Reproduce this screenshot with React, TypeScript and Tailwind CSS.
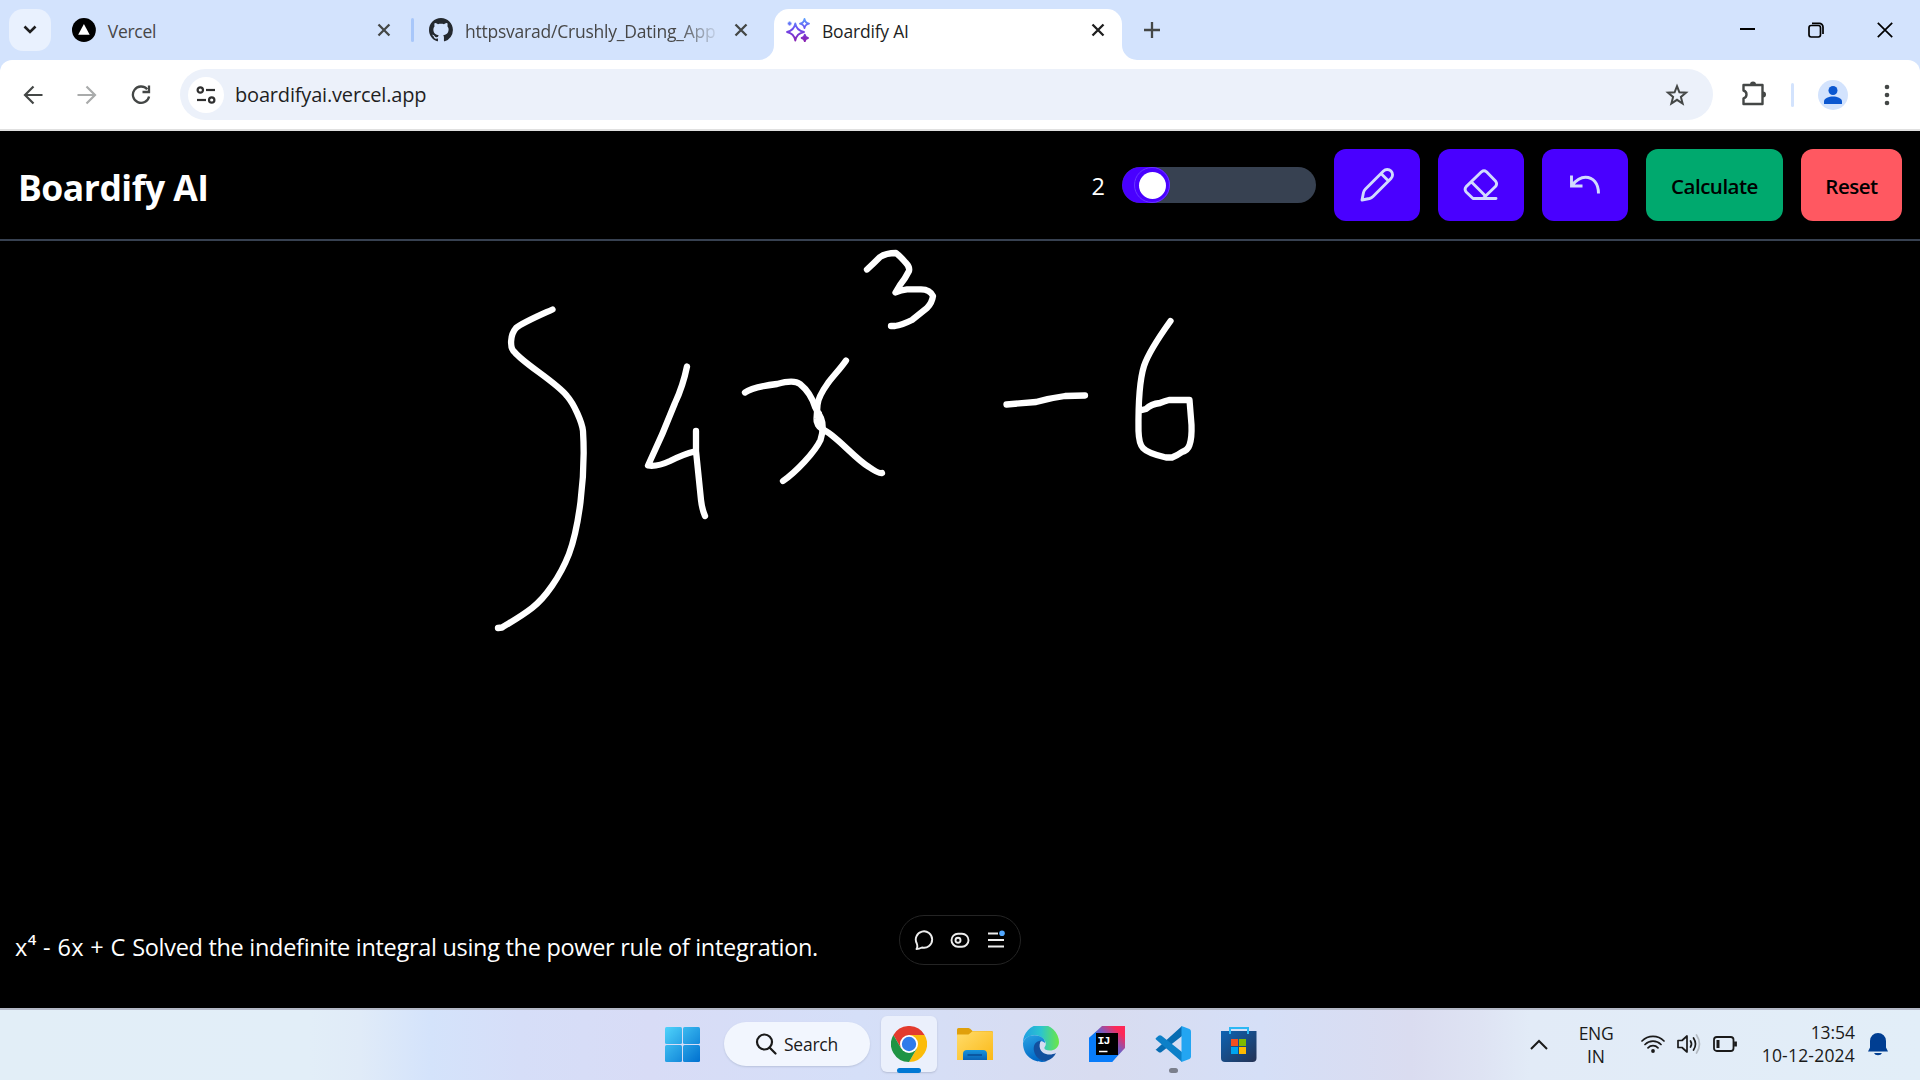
import React from "react";

const ui = "font-['Open_Sans','Noto_Sans',sans-serif]";

interface TxtProps {
  children: React.ReactNode;
  className?: string;
}

// Single-line label with a tight line box.
function Txt({ children, className = "" }: TxtProps) {
  return <span className={`block whitespace-nowrap leading-none ${className}`}>{children}</span>;
}

function Close({ c = "#444746" }: { c?: string }) {
  return (
    <svg width="14" height="14" viewBox="0 0 14 14" stroke={c} strokeWidth="2.3">
      <path d="M1.5 1.5 12.5 12.5M12.5 1.5 1.5 12.5" />
    </svg>
  );
}

function Sparkles() {
  return (
    <svg width="24" height="24" viewBox="0 0 24 24" fill="none" strokeWidth="1.8" strokeLinejoin="round">
      <defs>
        <linearGradient id="sp" x1="0" y1="0" x2="0" y2="24" gradientUnits="userSpaceOnUse">
          <stop offset="0" stopColor="#5ba4ff" />
          <stop offset=".45" stopColor="#6d4cf0" />
          <stop offset="1" stopColor="#8a1fae" />
        </linearGradient>
      </defs>
      <g stroke="url(#sp)">
        <path d="M9.3 5.5Q10.600 12.600 18 14Q10.600 15.400 9.3 22.500Q8 15.400 1 14Q8 12.600 9.3 5.5Z" />
        <path d="M18.500 1Q19.200 5 23 5.600Q19.200 6.300 18.500 10Q17.800 6.300 14 5.600Q17.800 5 18.500 1Z" />
        <path d="M18.800 16.600Q19.300 19.500 22 20Q19.300 20.500 18.800 23.400Q18.300 20.500 15.600 20Q18.300 19.500 18.800 16.600Z" fill="#8a1fae" />
        <path d="M3.600 3.600V7.400M1.700 5.500H5.500" />
      </g>
    </svg>
  );
}

function TabStrip() {
  return (
    <div className="flex h-[60px] items-end bg-[#d3e3fd] pl-[9px]">
      <div className="mb-[9px] flex size-[42px] items-center justify-center rounded-[14px] bg-[#e9f1fe]">
        <svg width="14" height="10" viewBox="0 0 14 10" fill="none" stroke="#1f1f1f" strokeWidth="2.6"><path d="M1.5 1.5 7 7 12.500 1.500" /></svg>
      </div>
      <div className="ml-[21px] flex h-[60px] w-[319px] items-center">
        <svg width="24" height="24" viewBox="0 0 24 24"><circle cx="12" cy="12" r="12" fill="#000" /><path d="M12 6 17.800 16.800H6.200Z" fill="#fff" /></svg>
        <div className="ml-3 mt-[3px] w-[271px]"><Txt className="text-[17.5px] tracking-[-0.3px] text-[#474747]">Vercel</Txt></div>
        <Close />
      </div>
      <div className="mb-[18px] ml-[20px] h-[24px] w-[3px] rounded-sm bg-[#a8c7fa]" />
      <div className="ml-[15px] flex h-[60px] w-[319px] items-center">
        <svg width="24" height="24" viewBox="0 0 16 16" fill="#24292f"><path d="M8 0C3.580 0 0 3.580 0 8c0 3.540 2.290 6.530 5.470 7.590.4.070.55-.17.55-.38 0-.19-.01-.82-.01-1.490-2.010.37-2.530-.49-2.690-.94-.09-.23-.48-.94-.82-1.130-.28-.15-.68-.52-.01-.53.63-.01 1.080.58 1.230.82.72 1.210 1.870.87 2.330.66.07-.52.28-.87.51-1.070-1.780-.2-3.640-.89-3.640-3.950 0-.87.31-1.590.82-2.150-.08-.2-.36-1.020.08-2.120 0 0 .67-.21 2.200.82.64-.18 1.320-.27 2-.27s1.360.09 2 .27c1.530-1.040 2.200-.82 2.200-.82.44 1.100.16 1.920.08 2.120.51.56.82 1.270.82 2.150 0 3.070-1.870 3.750-3.650 3.950.29.25.54.73.54 1.480 0 1.070-.01 1.930-.01 2.200 0 .21.15.46.55.38A8.010 8.010 0 0 0 16 8c0-4.420-3.580-8-8-8" /></svg>
        <div className="ml-3 w-[254px] pb-1 pt-[7px] [mask-image:linear-gradient(to_right,#000_84%,transparent_101%)]"><Txt className="text-[17.5px] tracking-[-0.22px] text-[#474747]">httpsvarad/Crushly_Dating_App</Txt></div>
        <div className="ml-[16px]"><Close /></div>
      </div>
      <div className="relative ml-[26px] flex h-[51px] w-[348px] items-center rounded-t-[15px] bg-white pb-[9px] pl-3">
        <svg className="absolute -left-[15px] bottom-0" width="15" height="15"><path d="M15 0V15H0A15 15 0 0 0 15 0" fill="#fff" /></svg>
        <svg className="absolute -right-[15px] bottom-0" width="15" height="15"><path d="M0 0V15H15A15 15 0 0 1 0 0" fill="#fff" /></svg>
        <Sparkles />
        <div className="ml-3 mt-[3px] w-[269px]"><Txt className="text-[17.5px] tracking-[-0.2px] text-[#1f1f1f]">Boardify AI</Txt></div>
        <Close c="#1f1f1f" />
      </div>
      <svg className="mb-[22px] ml-[22px]" width="16" height="16" viewBox="0 0 16 16" stroke="#444746" strokeWidth="2.300"><path d="M8 0V16M0 8H16" /></svg>
      <div className="ml-auto flex h-[60px] items-center gap-[53px] pr-[27px]">
        <svg className="ml-px" width="16" height="16" viewBox="0 0 16 16" stroke="#000" strokeWidth="2"><path d="M1 7H16" /></svg>
        <svg width="16" height="16" viewBox="0 0 16 16" fill="none" stroke="#000" strokeWidth="1.700"><rect x="1" y="3.500" width="11.500" height="11.500" rx="2.200" /><path d="M4 1.300H11.200A3.700 3.700 0 0 1 15 5V12" /></svg>
        <svg width="16" height="16" viewBox="0 0 16 16" stroke="#000" strokeWidth="1.700"><path d="M.8.8 15.200 15.200M15.200.8.8 15.200" /></svg>
      </div>
    </div>
  );
}

function Toolbar() {
  return (
    <div className="bg-[#d3e3fd]">
      <div className="flex h-[71px] items-center rounded-t-[12px] border-b-2 border-[#e0e0e0] bg-white pl-[23px]">
        <svg width="20" height="20" viewBox="0 0 20 20" fill="none" stroke="#444746" strokeWidth="2.200"><path d="M10.500 1.500 2 10 10.500 18.500M2 10H19.500" /></svg>
        <svg className="ml-[34px]" width="20" height="20" viewBox="0 0 20 20" fill="none" stroke="#a9abab" strokeWidth="2.200"><path d="M9.500 1.500 18 10 9.500 18.500M18 10H.5" /></svg>
        <svg className="ml-[34px]" width="20" height="20" viewBox="0 0 20 20" fill="none" stroke="#444746" strokeWidth="2.300"><path d="M16.200 4.200A8.200 8.200 0 1 0 18.100 11.500M18 .5V7H11.500" /></svg>
        <div className="ml-[29px] flex h-[51px] w-[1533px] items-center rounded-full bg-[#ecf1fa] pl-2">
          <div className="flex size-9 items-center justify-center rounded-full bg-white">
            <svg width="20" height="18" viewBox="0 0 20 18" fill="none" stroke="#303030" strokeWidth="2.200"><circle cx="4.300" cy="4" r="2.700" /><path d="M10 4H19" /><circle cx="15.700" cy="14" r="2.700" /><path d="M1 14H10" /></svg>
          </div>
          <div className="ml-[11px]"><Txt className="text-[20px] tracking-[-0.18px] text-[#1f1f1f]">boardifyai.vercel.app</Txt></div>
          <svg className="ml-auto mr-[24px]" width="24" height="24" viewBox="0 0 24 24" fill="none" stroke="#444746" strokeWidth="2"><path d="M12 3.200 14.400 9.300 21 9.700 15.900 13.900 17.600 20.500 12 16.800 6.400 20.500 8.100 13.900 3 9.700 9.600 9.300Z" /></svg>
        </div>
        <svg className="mb-[3px] ml-[28px]" width="26" height="26" viewBox="0 0 26 26" fill="none" stroke="#444746" strokeWidth="2.400" strokeLinejoin="round"><path d="M2.500 5H21.500V24H2.500V18.500Q5.500 17.500 5.500 14.500T2.500 10.500Z" /><path d="M9 4.500A3 3 0 0 1 15 4.500ZM22 11.500A3 3 0 0 1 22 17.500Z" fill="#444746" stroke="none" /></svg>
        <div className="ml-[24px] h-[24px] w-[3px] rounded bg-[#d3e3fd]" />
        <div className="ml-6 flex size-[30px] items-center justify-center rounded-full bg-[#d3e3fd]">
          <svg width="18" height="18" viewBox="0 0 18 18" fill="#0b57d0"><circle cx="9" cy="4.500" r="4.500" /><path d="M0 18V15.500C0 12 5 10.500 9 10.500S18 12 18 15.500V18Z" /></svg>
        </div>
        <svg className="ml-[36px]" width="6" height="22" viewBox="0 0 6 22" fill="#444746"><circle cx="3" cy="3" r="2.300" /><circle cx="3" cy="11" r="2.300" /><circle cx="3" cy="19" r="2.300" /></svg>
      </div>
    </div>
  );
}

function ToolButton({ children }: { children: React.ReactNode }) {
  return <button className="flex h-[72px] w-[86px] items-center justify-center rounded-xl bg-[#4900ff] text-[#d1dbff]">{children}</button>;
}

function Header() {
  return (
    <header className="flex h-[110px] items-center border-b-2 border-[#374151] pl-[18px] pr-[18px]">
      <h1 className="mt-[5px]"><Txt className="text-[35.5px] font-bold tracking-[-0.5px] text-white">Boardify AI</Txt></h1>
      <div className="ml-auto mr-[17px] mt-[3px]"><Txt className="text-[23.5px] text-white">2</Txt></div>
      <div className="mr-[18px] flex h-9 w-[194px] items-center overflow-hidden rounded-full bg-[#374151]">
        <div className="flex h-9 w-12 justify-end rounded-full bg-[#4900ff]">
          <div className="flex size-9 items-center justify-center rounded-full border border-[#6a35ff]"><div className="size-[27px] rounded-full bg-white" /></div>
        </div>
      </div>
      <div className="flex gap-[18px]">
        <ToolButton>
          <svg width="36" height="36" viewBox="0 0 36 36" fill="none" stroke="currentColor" strokeWidth="2.900" strokeLinejoin="round"><path d="M3 33 4.500 25.500Q5 23.500 6.500 22L24.500 4A5.100 5.100 0 0 1 32 11.500L14 29.500Q12.500 31 10.500 31.500ZM22.500 7 29 13.500" /></svg>
        </ToolButton>
        <ToolButton>
          <svg width="36" height="36" viewBox="0 0 36 36" fill="none" stroke="currentColor" strokeWidth="2.900" strokeLinejoin="round" strokeLinecap="round"><path d="M33 31.500H10L3.200 25Q1 22.300 3.200 19.600L18.500 4.800Q21 2.800 23.500 4.800L32.700 14.300Q34.500 16.800 32.700 19.300L20.500 31M8.500 15 22.500 29" /></svg>
        </ToolButton>
        <ToolButton>
          <svg width="36" height="36" viewBox="0 0 36 36" fill="none" stroke="currentColor" strokeWidth="2.900"><path d="M4.500 8.500V19H15.500M5 18.500C10 12 14 10.300 18.500 10.300C26 10.300 31.500 16 31.500 26.500" /></svg>
        </ToolButton>
        <button className="flex h-[72px] w-[137px] items-center justify-center rounded-xl bg-[#00a96e] pt-0.5"><Txt className="text-[20.5px] font-[560] tracking-[-0.5px] text-black">Calculate</Txt></button>
        <button className="flex h-[72px] w-[101px] items-center justify-center rounded-xl bg-[#ff5861] pt-0.5"><Txt className="text-[20.5px] font-[560] tracking-[-0.5px] text-black">Reset</Txt></button>
      </div>
    </header>
  );
}

function Board() {
  return (
    <main className="relative h-[767px]">
      <svg className="block" width="1920" height="640" viewBox="0 241 1920 640" fill="none" stroke="#fff" strokeWidth="6.300" strokeLinecap="round" strokeLinejoin="round">
        <path d="M552.500 309.500C536 317 522 323 516 328C510 335 509.500 348 514.500 352C524 364 556 382 567 396C574 404 582 422 583 431C586 480 578 530 569 554C560 577 545 598 532 608C519 618 509 623 502 627.500L498 628" />
        <path d="M687 366.500Q683 386 675 403Q663 434 648 465.500Q657 467 670 461Q684 454 694.500 451.500M696 431V451L701 500Q702 509 705 516" />
        <path d="M745 392.500Q752 387 777 384C788 381 796 381 800 384Q811 393 815 407L821 418C823 423 823 432 820.500 440C815 452 796 472 783 481" />
        <path d="M846 360.500C841 368 834 375 828 383Q818 397 817.500 405L816.500 419C816 423 819 427 822 429C835 434 855 459 869 467Q879 474 882 473" />
        <path d="M819 414V424" />
        <path d="M867 269.500Q873 264 880 257Q886 253 896 253Q900 256 906 263Q910 267 909 271Q905 279 900 285L895.500 292.500Q901 290 907 289.300H921Q930 289.500 933 296Q932 303 927 308L912 320Q902 325 895 326H891" />
        <path d="M1006.500 404.500L1036 402Q1050 398 1065 396L1085 395.500" />
        <path d="M1170.500 321Q1149 351 1144 366Q1138 385 1138.500 431C1139 447 1141 452 1166 457.500H1172Q1178 455 1182 452Q1188 450 1189.500 445Q1192 438 1191.500 425L1189.500 400H1169Q1165 401 1160 403Q1151 404 1146 409L1142 410" />
      </svg>
      <div className={`absolute left-[15px] top-[690px] whitespace-nowrap text-[23.5px] leading-8 text-white ${ui}`}>
        <span className="tracking-[0.35px]">x<sup className="relative -top-[11px] align-baseline text-[15px] font-semibold leading-none">4</sup> - 6x + C </span>
        <span className="tracking-[-0.3px]">Solved the indefinite integral using the power rule of integration.</span>
      </div>
      <div className="absolute left-[899px] top-[674px] flex h-[50px] w-[122px] items-center justify-center gap-[16px] rounded-full border border-[#242424] bg-black">
        <svg width="20" height="22" viewBox="0 0 20 22" fill="none" stroke="#ededed" strokeWidth="1.900" strokeLinejoin="round"><path d="M2.500 20Q4 18 2.800 14.500A8.200 8.200 0 1 1 8 18.500Q5 20 2.500 20Z" /></svg>
        <svg width="20" height="20" viewBox="0 0 20 20" fill="none" stroke="#ededed" strokeWidth="1.900"><rect x="1.500" y="3.700" width="17" height="13" rx="6.500" /><circle cx="8" cy="10.200" r="2.500" /></svg>
        <svg width="20" height="20" viewBox="0 0 20 20" fill="none" stroke="#ededed" strokeWidth="1.800"><path d="M2 3.500H12M2 10H18M2 16.500H18" /><circle cx="16" cy="3.300" r="2.800" fill="#52a8ff" stroke="none" /></svg>
      </div>
    </main>
  );
}

function Chrome() {
  return (
    <svg width="36" height="36" viewBox="0 0 36 36">
      <path d="M2.400 9A18 18 0 0 1 33.600 9H18L10.200 22.500Z" fill="#e33b2e" />
      <path d="M33.600 9A18 18 0 0 1 18 36L25.800 22.500 18 9Z" fill="#fbbc0a" />
      <path d="M2.400 9A18 18 0 0 0 18 36L25.800 22.500H10.200Z" fill="#1f9444" />
      <circle cx="18" cy="18" r="9" fill="#fff" /><circle cx="18" cy="18" r="7.200" fill="#2f7bea" />
    </svg>
  );
}

function Taskbar() {
  return (
    <footer className="flex h-[72px] border-t-2 border-[#b3b8c6] bg-[linear-gradient(90deg,#e2eef7_0,#e2eef8_310px,#e0ebf8_360px,#d4e3fb_430px,#d6def8_520px,#d8dcf6_650px,#d5dff8_860px,#d8dcf0_1100px,#d5dff7_1260px,#dadcf0_1410px,#dee3f3_1480px,#e2ebf7_1530px,#e2eef8_1920px)] pb-[2px] text-[#1a1a1a]">
      <div className="flex w-[1260px] items-center pl-[665px]">
        <svg width="35" height="35" viewBox="0 0 35 35"><defs><linearGradient id="win" x2="1" y2="1" gradientUnits="objectBoundingBox"><stop stopColor="#4fd3fb" /><stop offset="1" stopColor="#0070cf" /></linearGradient></defs><mask id="wm"><rect width="17" height="17" rx="1.500" fill="#fff" /><rect x="18" width="17" height="17" rx="1.500" fill="#fff" /><rect y="18" width="17" height="17" rx="1.500" fill="#fff" /><rect x="18" y="18" width="17" height="17" rx="1.500" fill="#fff" /></mask><rect width="35" height="35" fill="url(#win)" mask="url(#wm)" /></svg>
        <div className="ml-6 flex h-[44px] w-[146px] items-center rounded-full bg-[#f2f6fe] pl-[31px] shadow-[0_1px_2px_#b9c3dc]">
          <svg width="22" height="22" viewBox="0 0 22 22" fill="none" stroke="#1a1a1a" strokeWidth="2.200" strokeLinecap="round"><circle cx="9.500" cy="9" r="7.500" /><path d="M14.500 14.500 20.500 20.500" /></svg>
          <div className="ml-[7px] mt-px"><Txt className="text-[17.5px] tracking-[-0.25px]">Search</Txt></div>
        </div>
        <div className="relative ml-[11px] flex h-14 w-14 items-center justify-center rounded-md bg-[#ebf0fc] shadow-[0_1px_2px_#b5bdd5]"><Chrome /><div className="absolute -bottom-px left-4 h-[5px] w-6 rounded-full bg-[#0078d4]" /></div>
        <svg className="ml-5" width="36" height="36" viewBox="0 0 36 36"><defs><linearGradient id="fo" x2="1" y2="1"><stop stopColor="#ffdc6b" /><stop offset="1" stopColor="#fbb917" /></linearGradient><linearGradient id="fb" x2="0" y2="1"><stop stopColor="#1794dd" /><stop offset="1" stopColor="#0b63b5" /></linearGradient></defs><path d="M0 10V3.500Q0 2 1.500 2H11.500Q13 2 15.500 5H34.500Q36 5 36 6.500V10Z" fill="#e0a00b" /><path d="M0 8.500H11.500L15.500 5.300H34.500Q36 5.500 36 7V34H0Z" fill="url(#fo)" /><path d="M6 34V28Q6 24 10 24H26Q30 24 30 28V34Z" fill="url(#fb)" /><path d="M10.500 29H25" stroke="#0a4f97" strokeWidth="1.600" /></svg>
        <svg className="ml-[30px]" width="36" height="36" viewBox="0 0 36 36">
          <defs><linearGradient id="e1" x2="1"><stop stopColor="#1f9fe4" /><stop offset=".5" stopColor="#2cc5ce" /><stop offset="1" stopColor="#6be745" /></linearGradient><linearGradient id="e2" x2=".4" y2="1"><stop stopColor="#2aa4e4" /><stop offset="1" stopColor="#0067c5" /></linearGradient></defs>
          <path d="M0 17A18 18 0 0 1 36 16C36 22 31 24.500 27 24.500C21.500 24.500 20.500 22.500 22 20.500C25 16 19 9 11.500 9.300C5 9.500 1 13 0 17Z" fill="url(#e1)" />
          <path d="M0 17C1.500 12 6 9.300 11.500 9.300C19 9.300 22.500 14 22 17C17 12 11 18 12 24C13 31 19 35 24 35C17 38 0 34 0 17Z" fill="url(#e2)" />
          <path d="M18 14.500C12 15 10 20 11 25C12.500 32 19 36 24 34.800C28 33.600 31.500 30.500 33 27C30 28.500 26.500 29 23 28C17 26.500 15 20 18 14.500Z" fill="#124f9e" />
        </svg>
        <svg className="ml-[30px]" width="36" height="36" viewBox="0 0 36 36"><defs><linearGradient id="ij" x1="0" y1="1" x2="1" y2="0"><stop offset=".35" stopColor="#087cfa" /><stop offset=".6" stopColor="#7b5bbd" /><stop offset=".85" stopColor="#fe2857" /></linearGradient></defs><path d="M13 0H36V22L23 36H0V12Z" fill="url(#ij)" /><path d="M0 12 7 6V29H29L23 36H2Q0 36 0 34Z" fill="#087cfa" /><rect x="7" y="7" width="22" height="22" fill="#000" /><path d="M10 25.500H18.500" stroke="#fff" strokeWidth="1.500" /><text x="8.500" y="18" fill="#fff" fontFamily="Liberation Mono" fontWeight="700" fontSize="11.500" letterSpacing="-1">IJ</text></svg>
        <div className="relative ml-[30px] size-9">
          <svg width="36" height="36" viewBox="0 0 36 36"><path d="M1 23.500 27 0V10L6.500 26Q5 27 3.500 26L1 24Q0 23.700 1 23.500Z" fill="#086cb2" /><path d="M1 12 3.500 9.800Q5 8.800 6.500 9.800L27 26V36L1 13.500Q0 12.800 1 12Z" fill="#0d80c8" /><path d="M26.500 0 34.500 3Q36 3.800 36 5.500V30.500Q36 32.200 34.500 33L26.500 36Z" fill="#23a5f2" /></svg>
          <div className="absolute left-[14px] top-[42px] h-[5px] w-[9px] rounded-full bg-[#7b7f8c]" />
        </div>
        <svg className="ml-[30px]" width="36" height="36" viewBox="0 0 36 36"><defs><linearGradient id="st" x2="1" y2="1"><stop stopColor="#0d63b4" /><stop offset="1" stopColor="#243254" /></linearGradient></defs><path d="M9 8V2H27V8" fill="none" stroke="#2cb8f4" strokeWidth="2" /><path d="M0 5H35.500V32Q35.500 36 31.500 36H4Q0 36 0 32Z" fill="url(#st)" /><path d="M9 8V5M27 8V5" stroke="#2cb8f4" strokeWidth="2" /><path d="M10 13H17V20H10Z" fill="#f25022" /><path d="M18 13H25V20H18Z" fill="#7fba00" /><path d="M10 21H17V28H10Z" fill="#00a4ef" /><path d="M18 21H25V28H18Z" fill="#ffb900" /></svg>
      </div>
      <div className="ml-auto flex items-center pr-[32px]">
        <svg width="18" height="11" viewBox="0 0 18 11" fill="none" stroke="#1a1a1a" strokeWidth="2"><path d="M1 10 9 2 17 10" /></svg>
        <div className="ml-[30px] flex w-[36px] flex-col items-center gap-[5px] pt-0.5"><Txt className="text-[17.5px] tracking-[-0.4px]">ENG</Txt><Txt className="text-[17.5px] tracking-[-0.1px]">IN</Txt></div>
        <svg className="ml-[27px]" width="24" height="24" viewBox="0 0 24 24" fill="none" stroke="#1a1a1a" strokeWidth="1.700" strokeLinecap="round"><path d="M1 9A15.500 15.500 0 0 1 23 9M4 12.500A11.300 11.300 0 0 1 20 12.500M7 15.800A7 7 0 0 1 17 15.800" /><circle cx="12" cy="19" r="1.900" fill="#1a1a1a" stroke="none" /></svg>
        <svg className="ml-3" width="24" height="24" viewBox="0 0 24 24" fill="none" stroke="#1a1a1a" strokeWidth="1.700" strokeLinejoin="round" strokeLinecap="round"><path d="M1 8.500H5L10 4V20L5 15.500H1ZM13.500 9Q15.500 12 13.500 15M16.500 6Q20.500 12 16.500 18" /><path d="M19.500 3Q25.500 12 19.500 21" stroke="#b3bac2" /></svg>
        <svg className="ml-3" width="24" height="24" viewBox="0 0 24 24" fill="none" stroke="#1a1a1a" strokeWidth="1.800"><rect x="1" y="5" width="19.500" height="14" rx="2.800" /><path d="M5 8V16" strokeWidth="3" /><path d="M22.500 9.500V14.500" strokeWidth="2.800" /></svg>
        <div className="flex w-[118px] flex-col items-end gap-[5px]"><Txt className="text-[17.5px] tracking-[-0.05px]">13:54</Txt><Txt className="text-[17.5px] tracking-[0.2px]">10-12-2024</Txt></div>
        <svg className="ml-[13px]" width="20" height="23" viewBox="0 0 20 23" fill="#003e92"><path d="M2 8A8 8 0 0 1 18 8V14.500L20 18.500H0L2 14.500ZM6 20H14A4.200 3.200 0 0 1 6 20" /></svg>
      </div>
    </footer>
  );
}

export default function App() {
  return (
    <div className={`flex h-[1080px] w-[1920px] flex-col overflow-hidden bg-black ${ui}`}>
      <TabStrip />
      <Toolbar />
      <Header />
      <Board />
      <Taskbar />
    </div>
  );
}
